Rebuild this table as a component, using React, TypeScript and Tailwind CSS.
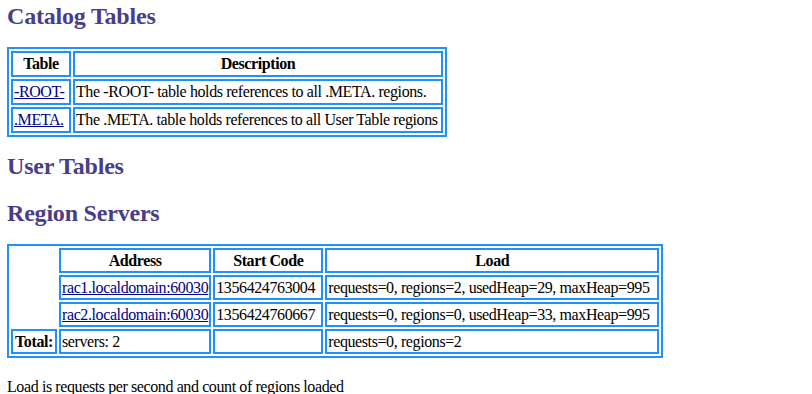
import React from 'react';

const cell = 'border-2 border-[#1e90ff] p-px whitespace-nowrap';
const head = `${cell} text-center font-bold`;
const link = 'text-[#00008b] underline';

const servers = [
  { address: 'rac1.localdomain:60030', code: '1356424763004', load: 'requests=0, regions=2, usedHeap=29, maxHeap=995' },
  { address: 'rac2.localdomain:60030', code: '1356424760667', load: 'requests=0, regions=0, usedHeap=33, maxHeap=995' },
];

const Heading: React.FC<{ children: React.ReactNode; className?: string }> = ({ children, className }) => (
  <h2 className={`text-[24px] leading-[28px] font-bold tracking-[-0.2px] text-[#483d8b] ${className ?? ''}`}>{children}</h2>
);

export default function App() {
  return (
    <div className="min-h-screen bg-white pl-[7px] pt-[2px] text-[16px] tracking-[-0.4px] text-black [font-family:'Liberation_Serif','Times_New_Roman',serif]">
      <Heading>Catalog Tables</Heading>

      <table className="mt-[17px] border-separate border-spacing-[2px] border-2 border-[#1e90ff] leading-[20px]">
        <thead>
          <tr>
            <th className={`${head} w-[60px]`}>Table</th>
            <th className={`${head} w-[370px]`}>Description</th>
          </tr>
        </thead>
        <tbody>
          <tr>
            <td className={cell}>
              <a href="#" className={link}>-ROOT-</a>
            </td>
            <td className={cell}>The -ROOT- table holds references to all .META. regions.</td>
          </tr>
          <tr>
            <td className={cell}>
              <a href="#" className={link}>.META.</a>
            </td>
            <td className={cell}>The .META. table holds references to all User Table regions</td>
          </tr>
        </tbody>
      </table>

      <Heading className="mt-[15px]">User Tables</Heading>
      <Heading className="mt-[19px]">Region Servers</Heading>

      <table className="mt-[17px] border-separate border-spacing-[2px] border-2 border-[#1e90ff] leading-[19px]">
        <thead>
          <tr>
            <th className="w-[46px] border-2 border-transparent p-px"></th>
            <th className={`${head} w-[152px]`}>Address</th>
            <th className={`${head} w-[110px]`}>Start Code</th>
            <th className={`${head} w-[334px]`}>Load</th>
          </tr>
        </thead>
        <tbody>
          {servers.map((s) => (
            <tr key={s.address}>
              <td className="border-2 border-transparent p-px"></td>
              <td className={cell}>
                <a href="#" className={link}>{s.address}</a>
              </td>
              <td className={cell}>{s.code}</td>
              <td className={cell}>{s.load}</td>
            </tr>
          ))}
          <tr>
            <td className={`${head}`}>Total:</td>
            <td className={cell}>servers: 2</td>
            <td className={cell}>&nbsp;</td>
            <td className={cell}>requests=0, regions=2</td>
          </tr>
        </tbody>
      </table>

      <p className="mt-[20px] leading-[18px]">Load is requests per second and count of regions loaded</p>
    </div>
  );
}
